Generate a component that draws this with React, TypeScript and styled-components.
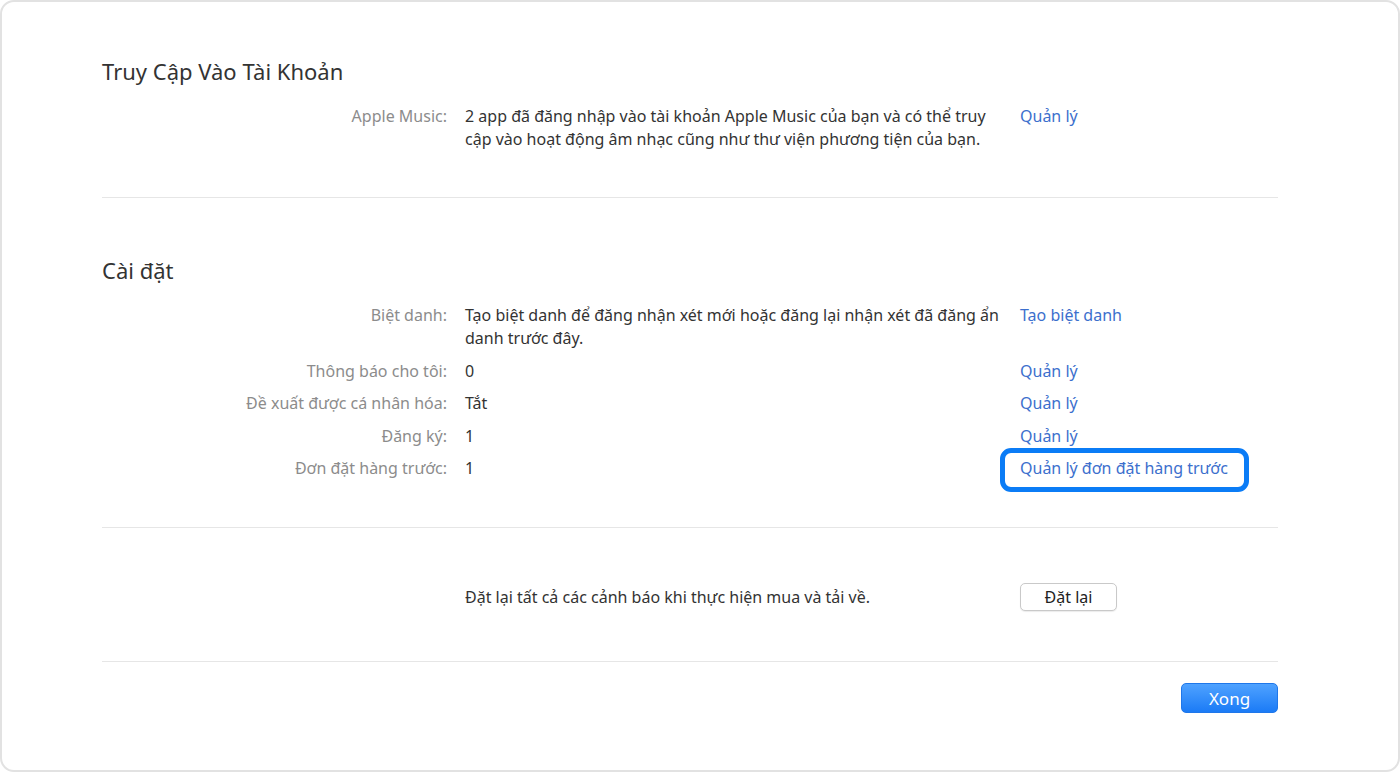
import React from 'react';
import styled, { createGlobalStyle } from 'styled-components';

const GlobalStyle = createGlobalStyle`
  html, body {
    margin: 0;
    padding: 0;
    background: #ffffff;
  }
  body {
    font-family: "Segoe UI", "Noto Sans", "Open Sans", sans-serif;
    color: #333333;
  }
  * {
    box-sizing: border-box;
  }
`;

const Card = styled.div`
  width: 1400px;
  height: 772px;
  border: 2px solid #e2e2e2;
  border-radius: 14px;
  background: #ffffff;
  padding: 0 120px 0 100px;
  display: flex;
  flex-direction: column;
`;

const Section = styled.section<{ $top: number; $bottom: number }>`
  padding-top: ${(p) => p.$top}px;
  padding-bottom: ${(p) => p.$bottom}px;
  border-bottom: 1px solid #e6e6e6;
`;

const Title = styled.h2`
  margin: 0 0 22px 0;
  font-size: 22px;
  line-height: 24px;
  font-weight: 400;
  color: #333333;
`;

const Grid = styled.div`
  display: grid;
  grid-template-columns: 345px 537px 1fr;
  column-gap: 18px;
  row-gap: 9.5px;
  font-size: 16px;
  line-height: 23px;
`;

const Label = styled.div`
  text-align: right;
  color: #8c8c8c;
`;

const Value = styled.div`
  color: #333333;
`;

const Action = styled.div`
  padding-left: 0;
`;

const Link = styled.a`
  position: relative;
  display: inline-block;
  color: #3c6fcd;
  text-decoration: none;
  cursor: pointer;
`;

const Highlight = styled.span`
  position: absolute;
  top: -9px;
  left: -20px;
  right: -21px;
  bottom: -12px;
  border: 5px solid #0b7cf6;
  border-radius: 11px;
  pointer-events: none;
`;

const ResetRow = styled.div`
  display: grid;
  grid-template-columns: 345px 537px 1fr;
  column-gap: 18px;
  align-items: center;
  font-size: 16px;
  line-height: 23px;
`;

const ResetButton = styled.button`
  width: 97px;
  height: 28px;
  border: 1px solid #c9c9c9;
  border-radius: 5px;
  background: #ffffff;
  box-shadow: 0 1px 1px rgba(0, 0, 0, 0.08);
  font-family: inherit;
  font-size: 16px;
  color: #222222;
  padding: 0;
`;

const Footer = styled.div`
  display: flex;
  justify-content: flex-end;
  padding-top: 21px;
`;

const DoneButton = styled.button`
  width: 97px;
  height: 30px;
  border: 1px solid #1f77ea;
  border-radius: 5px;
  background: linear-gradient(#4fa2ff, #1b7bf6);
  color: #ffffff;
  font-family: inherit;
  font-size: 17px;
  padding: 0;
`;

interface RowData {
  label: string;
  value: React.ReactNode;
  action: string;
  highlight?: boolean;
}

const accountRows: RowData[] = [
  {
    label: 'Apple Music:',
    value: '2 app đã đăng nhập vào tài khoản Apple Music của bạn và có thể truy cập vào hoạt động âm nhạc cũng như thư viện phương tiện của bạn.',
    action: 'Quản lý',
  },
];

const settingRows: RowData[] = [
  {
    label: 'Biệt danh:',
    value: 'Tạo biệt danh để đăng nhận xét mới hoặc đăng lại nhận xét đã đăng ẩn danh trước đây.',
    action: 'Tạo biệt danh',
  },
  { label: 'Thông báo cho tôi:', value: '0', action: 'Quản lý' },
  { label: 'Đề xuất được cá nhân hóa:', value: 'Tắt', action: 'Quản lý' },
  { label: 'Đăng ký:', value: '1', action: 'Quản lý' },
  { label: 'Đơn đặt hàng trước:', value: '1', action: 'Quản lý đơn đặt hàng trước', highlight: true },
];

const Rows = ({ rows }: { rows: RowData[] }): JSX.Element => (
  <Grid>
    {rows.map((row) => (
      <React.Fragment key={row.label}>
        <Label>{row.label}</Label>
        <Value>{row.value}</Value>
        <Action>
          <Link>
            {row.action}
            {row.highlight && <Highlight />}
          </Link>
        </Action>
      </React.Fragment>
    ))}
  </Grid>
);

const App = (): JSX.Element => (
  <>
    <GlobalStyle />
    <Card>
      <Section $top={57} $bottom={46}>
        <Title>Truy Cập Vào Tài Khoản</Title>
        <Rows rows={accountRows} />
      </Section>
      <Section $top={60} $bottom={47}>
        <Title>Cài đặt</Title>
        <Rows rows={settingRows} />
      </Section>
      <Section $top={55} $bottom={50}>
        <ResetRow>
          <span />
          <Value>Đặt lại tất cả các cảnh báo khi thực hiện mua và tải về.</Value>
          <div>
            <ResetButton>Đặt lại</ResetButton>
          </div>
        </ResetRow>
      </Section>
      <Footer>
        <DoneButton>Xong</DoneButton>
      </Footer>
    </Card>
  </>
);

export default App;
